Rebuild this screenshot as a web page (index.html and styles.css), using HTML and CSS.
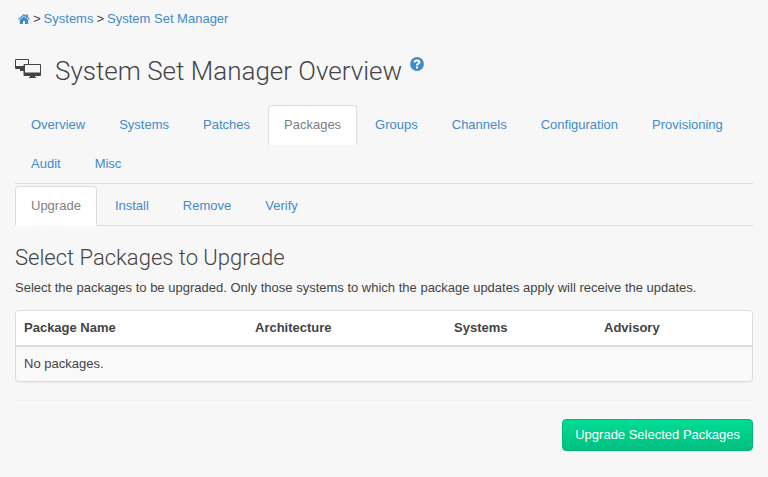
FILE: index.html
```html
<!DOCTYPE html>
<html lang="en">
<head>
<meta charset="utf-8">
<meta name="viewport" content="width=device-width, initial-scale=1">
<title>System Set Manager Overview</title>
<link rel="stylesheet" href="styles.css">
</head>
<body>
<nav class="breadcrumb" aria-label="Breadcrumb">
<a href="#" class="home" aria-label="Home"><svg width="12" height="10" viewBox="0 0 12 10" fill="currentColor"><path d="M6 2.200 10.200 5.700V9.300Q10.200 10 9.500 10H7V7H5v3H2.500Q1.800 10 1.800 9.300V5.700Z"/><path d="M0 5 5.500.3Q6 0 6.500.3L8.200 1.700V.5h1.800v2.800L12 5l-.7.8L6 1.400.7 5.800Z"/></svg></a>
<span>&gt;</span> <a href="#">Systems</a> <span>&gt;</span> <a href="#">System Set Manager</a>
</nav>
<main>
<h1><svg class="group-icon" width="27" height="20" viewBox="0 0 27 20"><path fill="#444" d="M1 0h12q1 0 1 1v10H9v1H5v-2H1q-1 0-1-1V1q0-1 1-1Z"/><path fill="#f7f7f7" d="M1 1h12v6H1Z"/><path fill="#444" d="M9.500 5h15.500q1 0 1 1v10q0 1-1 1h-5v1h1v1h-7v-1h1v-1H9.500q-1 0-1-1V6q0-1 1-1Z"/><path fill="#f7f7f7" d="M10 6h15v7.500H10Z"/></svg><span>System Set Manager Overview</span><a href="#" class="help" aria-label="Help"><svg width="14" height="14" viewBox="0 0 14 14"><circle cx="7" cy="7" r="6.900" fill="#428bca"/><path d="M4.500 5.400Q4.700 3.400 7 3.400q2.400 0 2.400 1.900 0 .9-1.300 1.500Q7 7.300 7 8.400" fill="none" stroke="#fff" stroke-width="2"/><path d="M6 9.500h2v2H6Z" fill="#fff"/></svg></a></h1>
<ul class="tabs">
<li><a href="#">Overview</a></li>
<li><a href="#">Systems</a></li>
<li><a href="#">Patches</a></li>
<li><a href="#" class="active">Packages</a></li>
<li><a href="#">Groups</a></li>
<li><a href="#">Channels</a></li>
<li><a href="#">Configuration</a></li>
<li><a href="#">Provisioning</a></li>
<li><a href="#">Audit</a></li>
<li><a href="#">Misc</a></li>
</ul>
<ul class="tabs">
<li><a href="#" class="active">Upgrade</a></li>
<li><a href="#">Install</a></li>
<li><a href="#">Remove</a></li>
<li><a href="#">Verify</a></li>
</ul>
<h2>Select Packages to Upgrade</h2>
<p>Select the packages to be upgraded. Only those systems to which the package updates apply will receive the updates.</p>
<div class="panel">
<table>
<colgroup><col class="name"><col class="arch"><col class="systems"><col></colgroup>
<thead><tr><th>Package Name</th><th>Architecture</th><th>Systems</th><th>Advisory</th></tr></thead>
<tbody><tr><td colspan="4">No packages.</td></tr></tbody>
</table>
</div>
<hr>
<div class="actions"><button type="button">Upgrade Selected Packages</button></div>
</main>
</body>
</html>
```
FILE: styles.css
```css
* { box-sizing: border-box; }
body {
  margin: 0;
  padding: 9px 15px 26px;
  background: #f7f7f7;
  color: #444;
  font: 13px/20px "Liberation Sans", Arial, sans-serif;
}
a { color: #428bca; text-decoration: none; }
.breadcrumb { display: flex; align-items: center; gap: 3px; padding-left: 3px; }
.home { display: flex; }
h1, h2 { font-family: Roboto, sans-serif; font-weight: 300; }
h1 {
  display: flex;
  align-items: flex-start;
  margin: 27px 0 19px;
  font-size: 26px;
  line-height: 30px;
}
.group-icon { margin: 3px 13px 0 0; }
.help { display: flex; margin: 1px 0 0 8px; }
.tabs {
  display: flex;
  flex-wrap: wrap;
  margin: 0 0 2px;
  padding: 0;
  border-bottom: 1px solid #ddd;
  list-style: none;
}
.tabs li { height: 40px; margin: 0 2px -1px 0; }
.tabs a {
  display: block;
  height: 40px;
  padding: 9px 15px;
  border: 1px solid transparent;
  border-radius: 4px 4px 0 0;
}
.tabs .active {
  border-color: #ddd;
  border-bottom-color: #fff;
  background: #fff;
  color: #808080;
}
h2 { margin: 19px 0 7px; font-size: 22px; line-height: 26px; }
p { margin: 0 0 12px; }
.panel {
  overflow: hidden;
  border: 1px solid #ddd;
  border-radius: 4px;
  background: #f9f9f9;
  box-shadow: 0 1px 1px rgba(0, 0, 0, .05);
}
table { width: 100%; border-collapse: collapse; table-layout: fixed; }
.name { width: 231px; }
.arch { width: 199px; }
.systems { width: 150px; }
th, td { height: 34px; padding: 7px 8px; text-align: left; }
th { height: 35px; border-bottom: 2px solid #ddd; background: #fff; font-weight: 700; }
hr { margin: 18px 0; border: 0; border-top: 1px solid #f0f0f0; }
.actions { display: flex; justify-content: flex-end; }
button {
  height: 32px;
  padding: 0 12px;
  border: 1px solid #00b87a;
  border-radius: 4px;
  background: linear-gradient(#00dc94, #00c081);
  color: #fff;
  font: inherit;
}
```
